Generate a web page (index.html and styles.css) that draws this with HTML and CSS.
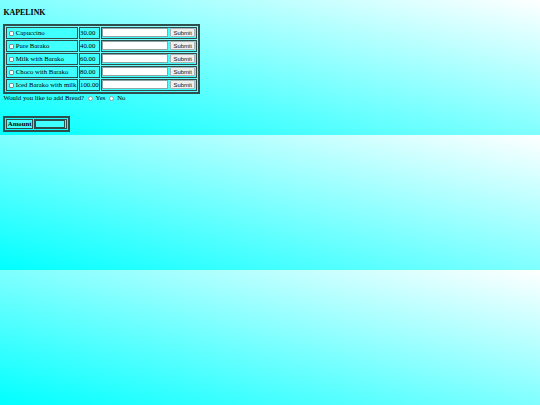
FILE: index.html
```html
<!DOCTYPE html>
<html lang="en">
<head>
<meta charset="utf-8">
<title>Kapelink</title>
<link rel="stylesheet" href="styles.css">
</head>
<body class="page">
<h3 class="title">KAPELINK</h3>
<form class="order">
<table class="menu">
<tr><td class="item"><input type="checkbox" class="check">Capuccino</td><td class="price">30.00</td><td class="qty"><input type="text" class="field"> <input type="button" class="btn" value="Submit"></td></tr>
<tr><td class="item"><input type="checkbox" class="check">Pure Barako</td><td class="price">40.00</td><td class="qty"><input type="text" class="field"> <input type="button" class="btn" value="Submit"></td></tr>
<tr><td class="item"><input type="checkbox" class="check">Milk with Barako</td><td class="price">60.00</td><td class="qty"><input type="text" class="field"> <input type="button" class="btn" value="Submit"></td></tr>
<tr><td class="item"><input type="checkbox" class="check">Choco with Barako</td><td class="price">80.00</td><td class="qty"><input type="text" class="field"> <input type="button" class="btn" value="Submit"></td></tr>
<tr><td class="item"><input type="checkbox" class="check">Iced Barako with milk</td><td class="price">100.00</td><td class="qty"><input type="text" class="field"> <input type="button" class="btn" value="Submit"></td></tr>
</table>
<div class="bread">Would you like to add Bread? <input type="radio" name="bread" class="radio"> Yes <input type="radio" name="bread" class="radio"> No</div>
<table class="amount"><tr><th class="amount-label">Amount</th><td class="amount-cell"><input type="text" class="amount-field"></td></tr></table>
</form>
</body>
</html>
```
FILE: styles.css
```css
body.page {
  margin: 3.4px;
  font-family: "Liberation Serif", "Times New Roman", serif;
  font-size: 6.75px;
  color: #000;
  background: linear-gradient(to top right, #00ffff, #ffffff);
}

.title {
  font-size: 7.9px;
  font-weight: bold;
  margin: 5px 0 6.5px;
}

.order {
  margin: 0;
}

.menu {
  border: 2px solid #2f4f4f;
  border-collapse: separate;
  border-spacing: 1px;
}

.menu td {
  border: 1px solid #2f4f4f;
  padding: 0.4px;
  background: #40ffff;
  white-space: nowrap;
  vertical-align: middle;
}

.check {
  appearance: none;
  box-sizing: border-box;
  width: 5px;
  height: 5px;
  margin: 0 1.3px 0 1.7px;
  border: 1px solid #7f8f8f;
  border-radius: 1px;
  background: #fff;
  vertical-align: middle;
}

.field {
  box-sizing: border-box;
  width: 66px;
  height: 9.2px;
  margin: 0;
  padding: 0;
  border: 1px solid #8fa5a5;
  background: #fff;
  font-size: 5.6px;
  vertical-align: middle;
}

.btn {
  box-sizing: border-box;
  width: 25px;
  height: 9.2px;
  margin: 0;
  padding: 0;
  border: 1px solid #a9b2b2;
  border-radius: 1px;
  background: #efefef;
  color: #111;
  font: 5.9px "Liberation Sans", Arial, sans-serif;
  vertical-align: middle;
}

.bread {
  white-space: nowrap;
}

.radio {
  appearance: none;
  box-sizing: border-box;
  width: 5px;
  height: 5px;
  margin: 1.3px 1.3px 0 2.1px;
  border: 1px solid #8fa0a0;
  border-radius: 50%;
  background: #fff;
  vertical-align: -1px;
}

.amount {
  margin-top: 15px;
  border: 2px solid #2f4f4f;
  border-collapse: separate;
  border-spacing: 1px;
  line-height: 6px;
}

.amount-label,
.amount-cell {
  border: 1px solid #2f4f4f;
  padding: 0.4px;
  background: #40ffff;
  vertical-align: middle;
}

.amount-label {
  font-weight: bold;
}

.amount-field {
  box-sizing: border-box;
  width: 30px;
  height: 7.5px;
  margin: 0;
  padding: 0;
  border: 1px solid #2f4f4f;
  background: transparent;
  vertical-align: middle;
}
```
